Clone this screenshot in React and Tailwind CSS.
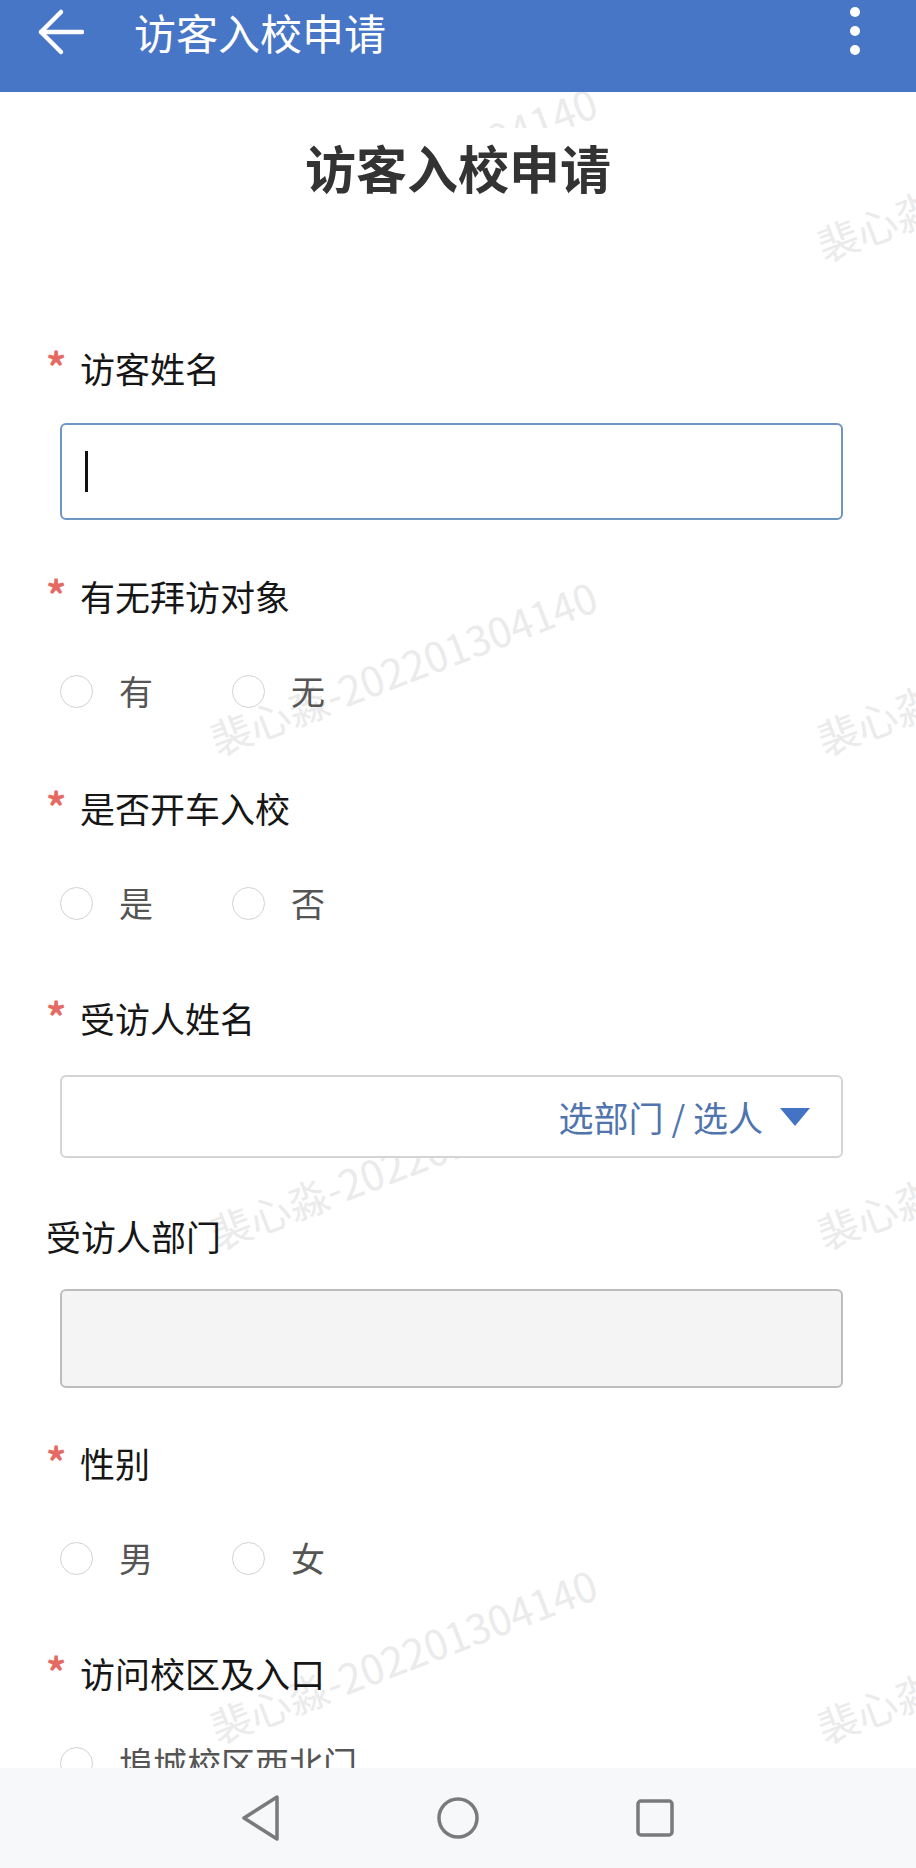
import React from "react";

const WM = "裴心淼-202201304140";

const marks = [
    "left-[403px] top-[81px]",
    "left-[403px] top-[575px]",
    "left-[403px] top-[1069px]",
    "left-[403px] top-[1563px]",
    "left-[1010px] top-[81px]",
    "left-[1010px] top-[575px]",
    "left-[1010px] top-[1069px]",
    "left-[1010px] top-[1563px]",
];

function Label({ text, required = true, className = "" }) {
    return (
        <div className={`flex pl-[46px] h-[50px] items-center ${className}`}>
            {required ? (
                <span className="w-[34px] text-[40px] font-bold leading-[50px] text-[#e46b63] -mt-[4px]">*</span>
            ) : null}
            <span className="text-[35px] leading-[50px] text-[#161616]">{text}</span>
        </div>
    );
}

function Radio({ label }) {
    return (
        <div className="flex items-center w-[172px] gap-[26px]">
            <span className="w-[33px] h-[33px] rounded-full border-[1.5px] border-[#d2d2d2] bg-white shrink-0"></span>
            <span className="text-[34px] leading-[50px] text-[#555555] whitespace-nowrap">{label}</span>
        </div>
    );
}

function RadioRow({ options, className = "" }) {
    return (
        <div className={`flex pl-[60px] h-[50px] items-center ${className}`}>
            {options.map((o) => (
                <Radio key={o} label={o} />
            ))}
        </div>
    );
}

export default function App() {
    return (
        <div className="w-[916px] h-[1868px] flex flex-col overflow-hidden bg-white font-['Noto_Sans_CJK_SC','Noto_Sans',sans-serif]">
            {/* top bar */}
            <div className="h-[92px] shrink-0 bg-[#4876c6] flex items-start relative z-20">
                <svg width="48" height="48" viewBox="0 0 48 48" className="ml-[36px] mt-[8px]" fill="none" stroke="white" strokeWidth="4.5" strokeLinecap="round" strokeLinejoin="round">
                    <path d="M5 24 H46" />
                    <path d="M25 4 L5 24 L25 44" />
                </svg>
                <span className="ml-[50px] text-[42px] leading-[64px] text-white">访客入校申请</span>
                <div className="ml-auto mr-[56px] mt-[7px] flex flex-col gap-[9px]">
                    <span className="w-[10px] h-[10px] rounded-full bg-white"></span>
                    <span className="w-[10px] h-[10px] rounded-full bg-white"></span>
                    <span className="w-[10px] h-[10px] rounded-full bg-white"></span>
                </div>
            </div>

            {/* scroll area */}
            <div className="flex-1 relative overflow-hidden">
                {marks.map((m) => (
                    <span key={m} className={`absolute ${m} -translate-x-1/2 -translate-y-1/2 rotate-[-21deg] whitespace-nowrap text-[41px] leading-none text-[#ebebeb] z-0`}>
                        {WM}
                    </span>
                ))}

                <div className="relative z-10 flex flex-col">
                    <div className="mt-[36px] mx-auto w-[700px] h-[134px] pt-[14px] bg-white text-center">
                        <h1 className="text-[51px] leading-[50px] font-bold text-[#333333]">访客入校申请</h1>
                    </div>

                    <Label text="访客姓名" className="mt-[81px]" />
                    <div className="mt-[30px] ml-[60px] w-[783px] h-[97px] rounded-[6px] border-2 border-[#6d97c2] bg-white flex items-center">
                        <span className="ml-[23px] w-[3px] h-[41px] bg-[#111111]"></span>
                    </div>

                    <Label text="有无拜访对象" className="mt-[51px]" />
                    <RadioRow options={["有", "无"]} className="mt-[45px]" />

                    <Label text="是否开车入校" className="mt-[67px]" />
                    <RadioRow options={["是", "否"]} className="mt-[45px]" />

                    <Label text="受访人姓名" className="mt-[65px]" />
                    <div className="mt-[32px] ml-[60px] w-[783px] h-[83px] rounded-[6px] border-2 border-[#d4d4d4] bg-white flex items-center justify-end pr-[31px]">
                        <span className="text-[35px] leading-[50px] text-[#5074ad] whitespace-pre">选部门 / 选人</span>
                        <svg width="30" height="18" viewBox="0 0 30 18" className="ml-[17px]">
                            <polygon points="0,0 30,0 15,18" fill="#4472c4" />
                        </svg>
                    </div>

                    <Label text="受访人部门" required={false} className="mt-[53px]" />
                    <div className="mt-[28px] ml-[60px] w-[783px] h-[99px] rounded-[6px] border-2 border-[#bdbdbd] bg-[#f4f4f4]"></div>

                    <Label text="性别" className="mt-[50px]" />
                    <RadioRow options={["男", "女"]} className="mt-[45px]" />

                    <Label text="访问校区及入口" className="mt-[65px]" />
                    <RadioRow options={["埠城校区西北门"]} className="mt-[40px]" />
                </div>
            </div>

            {/* system nav bar */}
            <div className="h-[100px] shrink-0 bg-[#f7f8fa] flex items-center justify-center gap-[155px] relative z-20">
                <svg width="40" height="48" viewBox="0 0 40 48" fill="none" stroke="#7a7a7a" strokeWidth="3.5" strokeLinejoin="round">
                    <path d="M36 3 L3 24 L36 45 Z" />
                </svg>
                <svg width="44" height="44" viewBox="0 0 44 44" fill="none" stroke="#7a7a7a" strokeWidth="3.5">
                    <circle cx="22" cy="22" r="19" />
                </svg>
                <svg width="40" height="40" viewBox="0 0 40 40" fill="none" stroke="#7a7a7a" strokeWidth="3.5">
                    <rect x="3" y="3" width="34" height="34" rx="3" />
                </svg>
            </div>
        </div>
    );
}
